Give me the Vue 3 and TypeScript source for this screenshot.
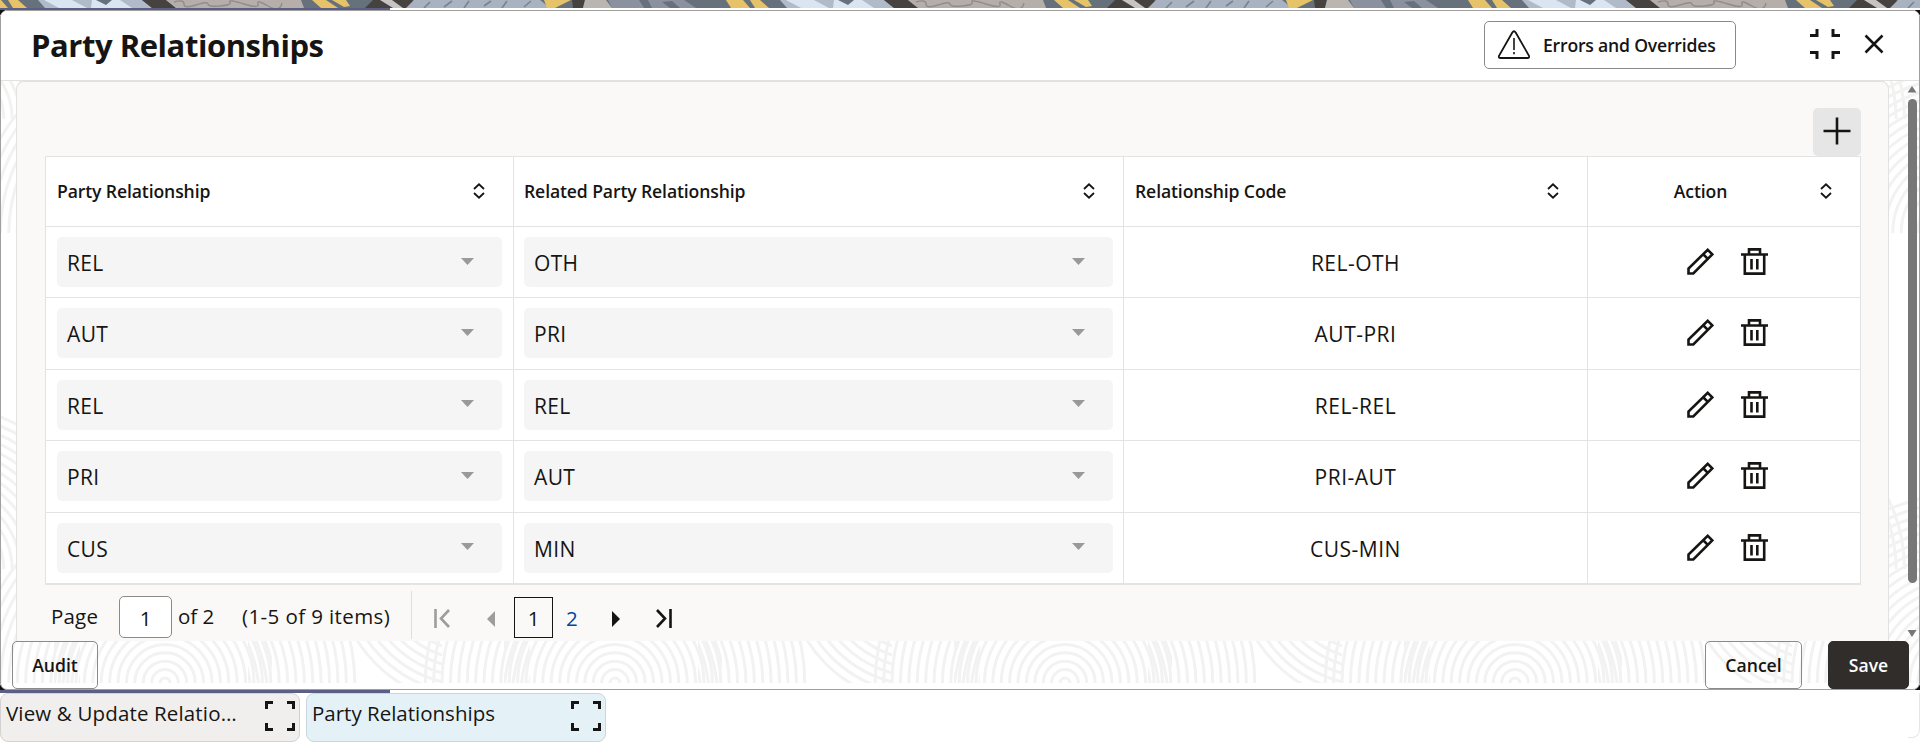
<script setup lang="ts">
interface Relationship {
  party: string
  related: string
}

const rows: Relationship[] = [
  { party: 'REL', related: 'OTH' },
  { party: 'AUT', related: 'PRI' },
  { party: 'REL', related: 'REL' },
  { party: 'PRI', related: 'AUT' },
  { party: 'CUS', related: 'MIN' },
]

const columns: string[] = ['Party Relationship', 'Related Party Relationship', 'Relationship Code', 'Action']

const radii: number[] = Array.from({ length: 23 }, (_, i) => 5 + i * 8.4)
const swoopRadii: number[] = Array.from({ length: 8 }, (_, i) => 72 + i * 8.6)
</script>

<template>
  <div class="screen">
    <svg class="banner" width="1920" height="8">
      <defs>
        <pattern id="strip" x="-16" width="742" height="8" patternUnits="userSpaceOnUse">
          <rect width="742" height="8" fill="#66717c" />
          <path d="M0 0H34L43 8H5z" fill="#e6c369" />
          <path d="M17 0H24L29 8H24z" fill="#66717c" />
          <path d="M54 0H158L168 8H61z" fill="#b0bac9" />
          <path d="M60 0H88L103 8H75zM108 0H136L148 8H107z" fill="#dbe4f1" />
          <path d="M112 0H128L122 5z" fill="#66717c" />
          <path d="M158 0H182L192 8H168z" fill="#46423f" />
          <path d="M182 0H317L320 8H192z" fill="#b5aeaa" />
          <path d="M190 2q10-3 10 2t12 1t12-1t12 2t10-4t14 2t14 0t10 2t14-3" fill="none" stroke="#918d8b" stroke-width="1.4" />
          <path d="M328 0H342L354 8H337zM348 0H362L366 6L360 7z" fill="#e6c369" />
          <path d="M389 0H428L438 8H381z" fill="#46423f" />
          <path d="M396 0H408L419 8H409z" fill="#c8c4c1" />
          <path d="M430 0H556L566 8H422z" fill="#a9b2c0" />
          <path d="M440 8l6-6M460 7l8-6M480 8l5-7M500 6l7-5M518 8l5-7M540 7l7-6" stroke="#78838f" stroke-width="1.6" />
          <path d="M560 0H587L571 8H563z" fill="#e6c369" />
          <path d="M588 0H601L599 8H589z" fill="#46423f" />
          <path d="M601 0H622L628 8H599z" fill="#bbb5b2" />
          <path d="M624 0H700L712 8H628z" fill="#8b919f" />
          <path d="M655 0H664L668 8H660zM678 2L688 1L696 8H686z" fill="#66717c" />
        </pattern>
      </defs>
      <rect width="1920" height="8" fill="url(#strip)" />
    </svg>

    <div class="progress"></div>

    <section class="modal">
      <svg class="texture" width="1918" height="614">
        <defs>
          <clipPath id="overlap-right"><rect x="308" y="340" width="24" height="110" /></clipPath>
          <clipPath id="overlap-left"><rect x="114" y="340" width="26" height="110" /></clipPath>
          <clipPath id="swoop-left"><rect x="0" y="337" width="52" height="113" /></clipPath>
          <clipPath id="swoop-right"><rect x="396" y="337" width="54" height="113" /></clipPath>
          <clipPath id="upper"><rect x="0" y="0" width="450" height="336" /></clipPath>
          <pattern id="rings" x="-61" y="-293" width="450" height="450" patternUnits="userSpaceOnUse">
            <g fill="none" stroke="#f2f2f2" stroke-width="3">
              <circle v-for="r in radii" :key="r" cx="225" cy="450" :r="r" />
              <g clip-path="url(#overlap-right)">
                <circle v-for="r in radii" :key="r" cx="180" cy="466" :r="r" />
              </g>
              <g clip-path="url(#overlap-left)">
                <circle v-for="r in radii" :key="r" cx="270" cy="466" :r="r" />
              </g>
              <g clip-path="url(#swoop-left)">
                <circle v-for="r in swoopRadii" :key="r" cx="79" cy="337" :r="r" />
              </g>
              <g clip-path="url(#swoop-right)">
                <circle v-for="r in swoopRadii" :key="r" cx="529" cy="337" :r="r" />
              </g>
              <g clip-path="url(#upper)">
                <circle v-for="r in radii.slice(0, 20)" :key="`l${r}`" cx="0" cy="337" :r="r" />
                <circle v-for="r in radii.slice(0, 20)" :key="`r${r}`" cx="450" cy="337" :r="r" />
              </g>
            </g>
          </pattern>
        </defs>
        <rect width="1918" height="614" fill="url(#rings)" />
      </svg>

      <header class="modal-head">
        <h1>Party Relationships</h1>
        <button class="btn errors">
          <svg width="34" height="30" viewBox="0 0 34 30" fill="none" stroke="#161513">
            <path d="M15.3 2.5Q17 0 18.7 2.5L32 25.8Q32.7 28 30.5 28H3.500Q1.300 28 2 25.800z" stroke-width="1.8" />
            <path d="M17 8V20M17 22V24.300" stroke-width="1.600" />
          </svg>
          <span>Errors and Overrides</span>
        </button>
        <svg class="compress" width="30" height="30" fill="none" stroke="#161513" stroke-width="3">
          <path d="M0 6.500H7V0M23 0V6.500H30M0 23.500H7V30M23 30V23.500H30" />
        </svg>
        <svg class="close" width="20" height="20" stroke="#161513" stroke-width="2.500"><path d="M1.500 1.500L18.500 18.500M18.500 1.500L1.500 18.500" /></svg>
      </header>

      <div class="content">
        <main class="panel">
          <div class="toolbar">
            <button class="add">
              <svg width="28" height="28" stroke="#161513" stroke-width="2.600"><path d="M14 .5V27.500M.5 14H27.500" /></svg>
            </button>
          </div>

          <div class="table">
            <div class="tr head">
              <div v-for="(name, i) in columns" :key="name" class="th" :class="{ centered: i === 3 }">
                <span>{{ name }}</span>
                <svg width="12" height="16" fill="none" stroke="#161513" stroke-width="1.800">
                  <path d="M1 6L6 1.300L11 6M1 10L6 14.700L11 10" />
                </svg>
              </div>
            </div>
            <div v-for="(row, i) in rows" :key="i" class="tr">
              <div v-for="(value, j) in [row.party, row.related]" :key="j" class="td">
                <div class="select">
                  <span>{{ value }}</span>
                  <svg width="13" height="7"><path d="M0 0H13L6.500 7z" fill="#9a9998" /></svg>
                </div>
              </div>
              <div class="td code">{{ row.party }}-{{ row.related }}</div>
              <div class="td actions">
                <svg width="27" height="27" fill="none" stroke="#161513" stroke-width="2.600">
                  <path d="M1.500 25.500V20.500L20.700 1.800L25.300 6.300L6.300 25.500zM16 6L20.800 10.800" />
                </svg>
                <svg width="27" height="27" fill="none" stroke="#161513" stroke-width="2.600">
                  <path d="M0 6.500H27M3.800 6.500V25.600H23.200V6.500M8 6.500V1.400H19V6.500M10.500 11V21.500M16.300 11V21.500" />
                </svg>
              </div>
            </div>
          </div>

          <nav class="pager">
            <span class="page-word">Page</span>
            <span class="page-input">1</span>
            <span class="of">of 2</span>
            <span class="items">(1-5 of 9 items)</span>
            <i class="rule"></i>
            <svg class="first" width="17" height="19" fill="none" stroke="#9e9d9b" stroke-width="2.600"><path d="M1.500 0V19M15 1L7 9.500L15 18" /></svg>
            <svg class="prev" width="8" height="16"><path d="M8 0V16L0 8z" fill="#9e9d9b" /></svg>
            <span class="current">1</span>
            <span class="page-link">2</span>
            <svg class="next" width="8" height="16"><path d="M0 0V16L8 8z" fill="#161513" /></svg>
            <svg class="last" width="17" height="19" fill="none" stroke="#161513" stroke-width="2.600"><path d="M15.500 0V19M2 1L10 9.500L2 18" /></svg>
          </nav>
        </main>

        <div class="scrollbar">
          <svg width="10" height="7"><path d="M5 0L9.500 6.500H.5z" fill="#777" /></svg>
          <i></i>
          <svg width="10" height="7"><path d="M.5 0H9.500L5 7z" fill="#777" /></svg>
        </div>
      </div>

      <footer class="foot">
        <button class="btn audit">Audit</button>
        <button class="btn cancel">Cancel</button>
        <button class="btn save">Save</button>
      </footer>
    </section>

    <div class="taskbar">
      <div class="task">
        <span class="t-view">View &amp; Update Relatio…</span>
        <svg width="30" height="30" fill="none" stroke="#161513" stroke-width="3"><path d="M1.500 8V1.500H8M22 1.500H28.500V8M28.500 22V28.500H22M8 28.500H1.500V22" /></svg>
      </div>
      <div class="task active">
        <span class="t-party">Party Relationships</span>
        <svg width="30" height="30" fill="none" stroke="#161513" stroke-width="3"><path d="M1.500 8V1.500H8M22 1.500H28.500V8M28.500 22V28.500H22M8 28.500H1.500V22" /></svg>
      </div>
      <i class="edge"></i>
    </div>
  </div>
</template>

<style>
body {
  margin: 0;
  background: #fff;
}
</style>

<style scoped>
* {
  box-sizing: border-box;
}
.screen {
  width: 1920px;
  height: 742px;
  overflow: hidden;
  display: flex;
  flex-direction: column;
  background:
    linear-gradient(#111, #111) 0 10px / 5px 5px no-repeat,
    linear-gradient(#111, #111) 100% 10px / 5px 5px no-repeat,
    linear-gradient(#111, #111) 0 685px / 5px 5px no-repeat,
    linear-gradient(#111, #111) 100% 685px / 5px 5px no-repeat,
    linear-gradient(#5b5f86, #5b5f86) 0 689px / 390px 4px no-repeat,
    #fff;
  color: #161513;
  font-family: 'Open Sans', 'Noto Sans', sans-serif;
  font-size: 20px;
  line-height: 28px;
}
svg {
  display: block;
  flex: none;
}
.banner {
  height: 8px;
}
.progress {
  height: 2px;
  background: linear-gradient(#5b5f86, #5b5f86) 0 0 / 390px 2px no-repeat;
}
.modal {
  position: relative;
  height: 680px;
  flex: none;
  border: 1px solid #a09f9e;
  border-radius: 7px;
  background: #fff;
  display: flex;
  flex-direction: column;
  overflow: hidden;
}
.texture {
  position: absolute;
  left: 0;
  top: 65px;
}
.modal-head {
  position: relative;
  height: 70px;
  flex: none;
  display: flex;
  background: #fff;
  border-bottom: 1px solid #e3e2df;
}
h1 {
  margin: 13px 0 0 30px;
  flex: 1;
  font-size: 31px;
  line-height: 42px;
  font-weight: 700;
  letter-spacing: -0.45px;
  white-space: nowrap;
}
.btn {
  height: 48px;
  border: 1px solid #8b8a88;
  border-radius: 5px;
  background: transparent;
  padding: 0;
  color: #161513;
  font: 600 17.600px/46px 'Open Sans', 'Noto Sans', sans-serif;
  white-space: nowrap;
}
.errors {
  width: 252px;
  margin-top: 10px;
  display: flex;
  align-items: center;
  padding-left: 12px;
  gap: 12px;
  letter-spacing: -0.2px;
}
.compress {
  margin: 18px 24px 0 74px;
}
.close {
  margin: 23px 35px 0 0;
}
.content {
  position: relative;
  height: 560px;
  flex: none;
  display: flex;
  justify-content: space-between;
}
.panel {
  width: 1873px;
  margin-left: 15px;
  border: 1px solid #e3e2df;
  border-bottom: 0;
  border-radius: 8px 8px 0 0;
  background: #faf9f8;
  padding: 26px 27px 0 28px;
}
.toolbar {
  display: flex;
  justify-content: flex-end;
  height: 48px;
}
.add {
  width: 48px;
  height: 48px;
  border: 0;
  border-radius: 5px;
  background: #e6e6e6;
  display: grid;
  place-items: center;
  padding: 0 0 2px;
}
.table {
  width: 1816px;
  border: 1px solid #e3e3e3;
  border-bottom-width: 2px;
  background: #fff;
}
.tr {
  display: grid;
  grid-template-columns: 468px 610px 464px 272px;
  height: 71.4px;
  border-bottom: 1px solid #e3e3e3;
}
.tr:last-child {
  height: 70.4px;
  border-bottom: 0;
}
.head {
  height: 70px;
}
.tr > div:not(:last-child) {
  border-right: 1px solid #e3e3e3;
}
.th {
  display: flex;
  align-items: center;
  justify-content: space-between;
  padding: 0 28px 2px 11px;
  font-size: 17.600px;
  font-weight: 600;
  letter-spacing: -0.12px;
}
.th:nth-child(2) {
  padding-left: 10px;
}
.centered span {
  flex: 1;
  text-align: center;
  padding-left: 7px;
  padding-right: 25px;
}
.td {
  padding: 10px 11px;
}
.td:nth-child(2) {
  padding: 10px 10px;
}
.select {
  height: 50px;
  border-radius: 5px;
  background: #f5f5f5;
  display: flex;
  align-items: center;
  justify-content: space-between;
  padding: 2px 28px 0 10px;
  font-size: 21px;
  letter-spacing: 0.35px;
}
.select svg {
  margin-bottom: 4px;
}
.code {
  text-align: center;
  padding-top: 22px !important;
  font-size: 21px;
  letter-spacing: 0.5px;
}
.actions {
  display: flex;
  gap: 27px;
  padding: 21px 0 0 99px;
}
.pager {
  display: flex;
  height: 54px;
  align-items: flex-start;
  padding: 6px 0 0 6px;
  white-space: nowrap;
  font-size: 20.500px;
}
.page-word {
  width: 68px;
  margin-top: 11px;
  letter-spacing: 0.2px;
}
.page-input {
  width: 53px;
  height: 42px;
  margin-top: 5px;
  border: 1px solid #8b8a88;
  border-radius: 5px;
  background: #fff;
  text-align: center;
  line-height: 42px;
}
.of {
  margin: 11px 0 0 6px;
  width: 64px;
}
.items {
  margin-top: 11px;
  width: 169px;
  letter-spacing: 0.4px;
}
.rule {
  width: 1px;
  height: 48px;
  background: #dededc;
}
.first {
  margin: 18px 0 0 22px;
}
.prev {
  margin: 20px 0 0 36px;
}
.current {
  margin: 6px 0 0 19px;
  width: 39px;
  height: 41px;
  border: 1px solid #161513;
  text-align: center;
  line-height: 41px;
}
.page-link {
  margin: 13px 0 0 13px;
  width: 12px;
  color: #00479d;
}
.next {
  margin: 20px 0 0 34px;
}
.last {
  margin: 18px 0 0 35px;
}
.scrollbar {
  width: 12px;
  display: flex;
  flex-direction: column;
  padding-top: 5px;
}
.scrollbar i {
  width: 9px;
  height: 484px;
  margin: 6px 0 47px 0.500px;
  border-radius: 5px;
  background: #777;
}
.foot {
  position: relative;
  height: 48px;
  display: flex;
  padding: 0 10px 0 11px;
}
.audit {
  width: 86px;
  margin-right: auto;
}
.cancel {
  width: 97px;
  margin-right: 26px;
}
.save {
  width: 81px;
  background: #312d2a;
  border-color: #312d2a;
  color: #fff;
}
.taskbar {
  display: flex;
  gap: 6px;
  margin-top: 3px;
  font-size: 20.500px;
}
.task {
  width: 300px;
  height: 49px;
  border: 1px solid #d3d2d0;
  border-radius: 8px;
  background: #f1efed;
  display: flex;
  justify-content: space-between;
  padding: 5px 4px 0 5px;
  white-space: nowrap;
}
.t-view {
  letter-spacing: 0.15px;
}
.task svg {
  margin-top: 2px;
}
.active {
  background: #e4f1f7;
  border-color: #c9d6dc;
}
.edge {
  width: 12px;
  height: 45px;
  margin-left: auto;
  border: solid #e6e6e6;
  border-width: 0 1px 1px 0;
  border-radius: 0 0 8px 0;
}
</style>
